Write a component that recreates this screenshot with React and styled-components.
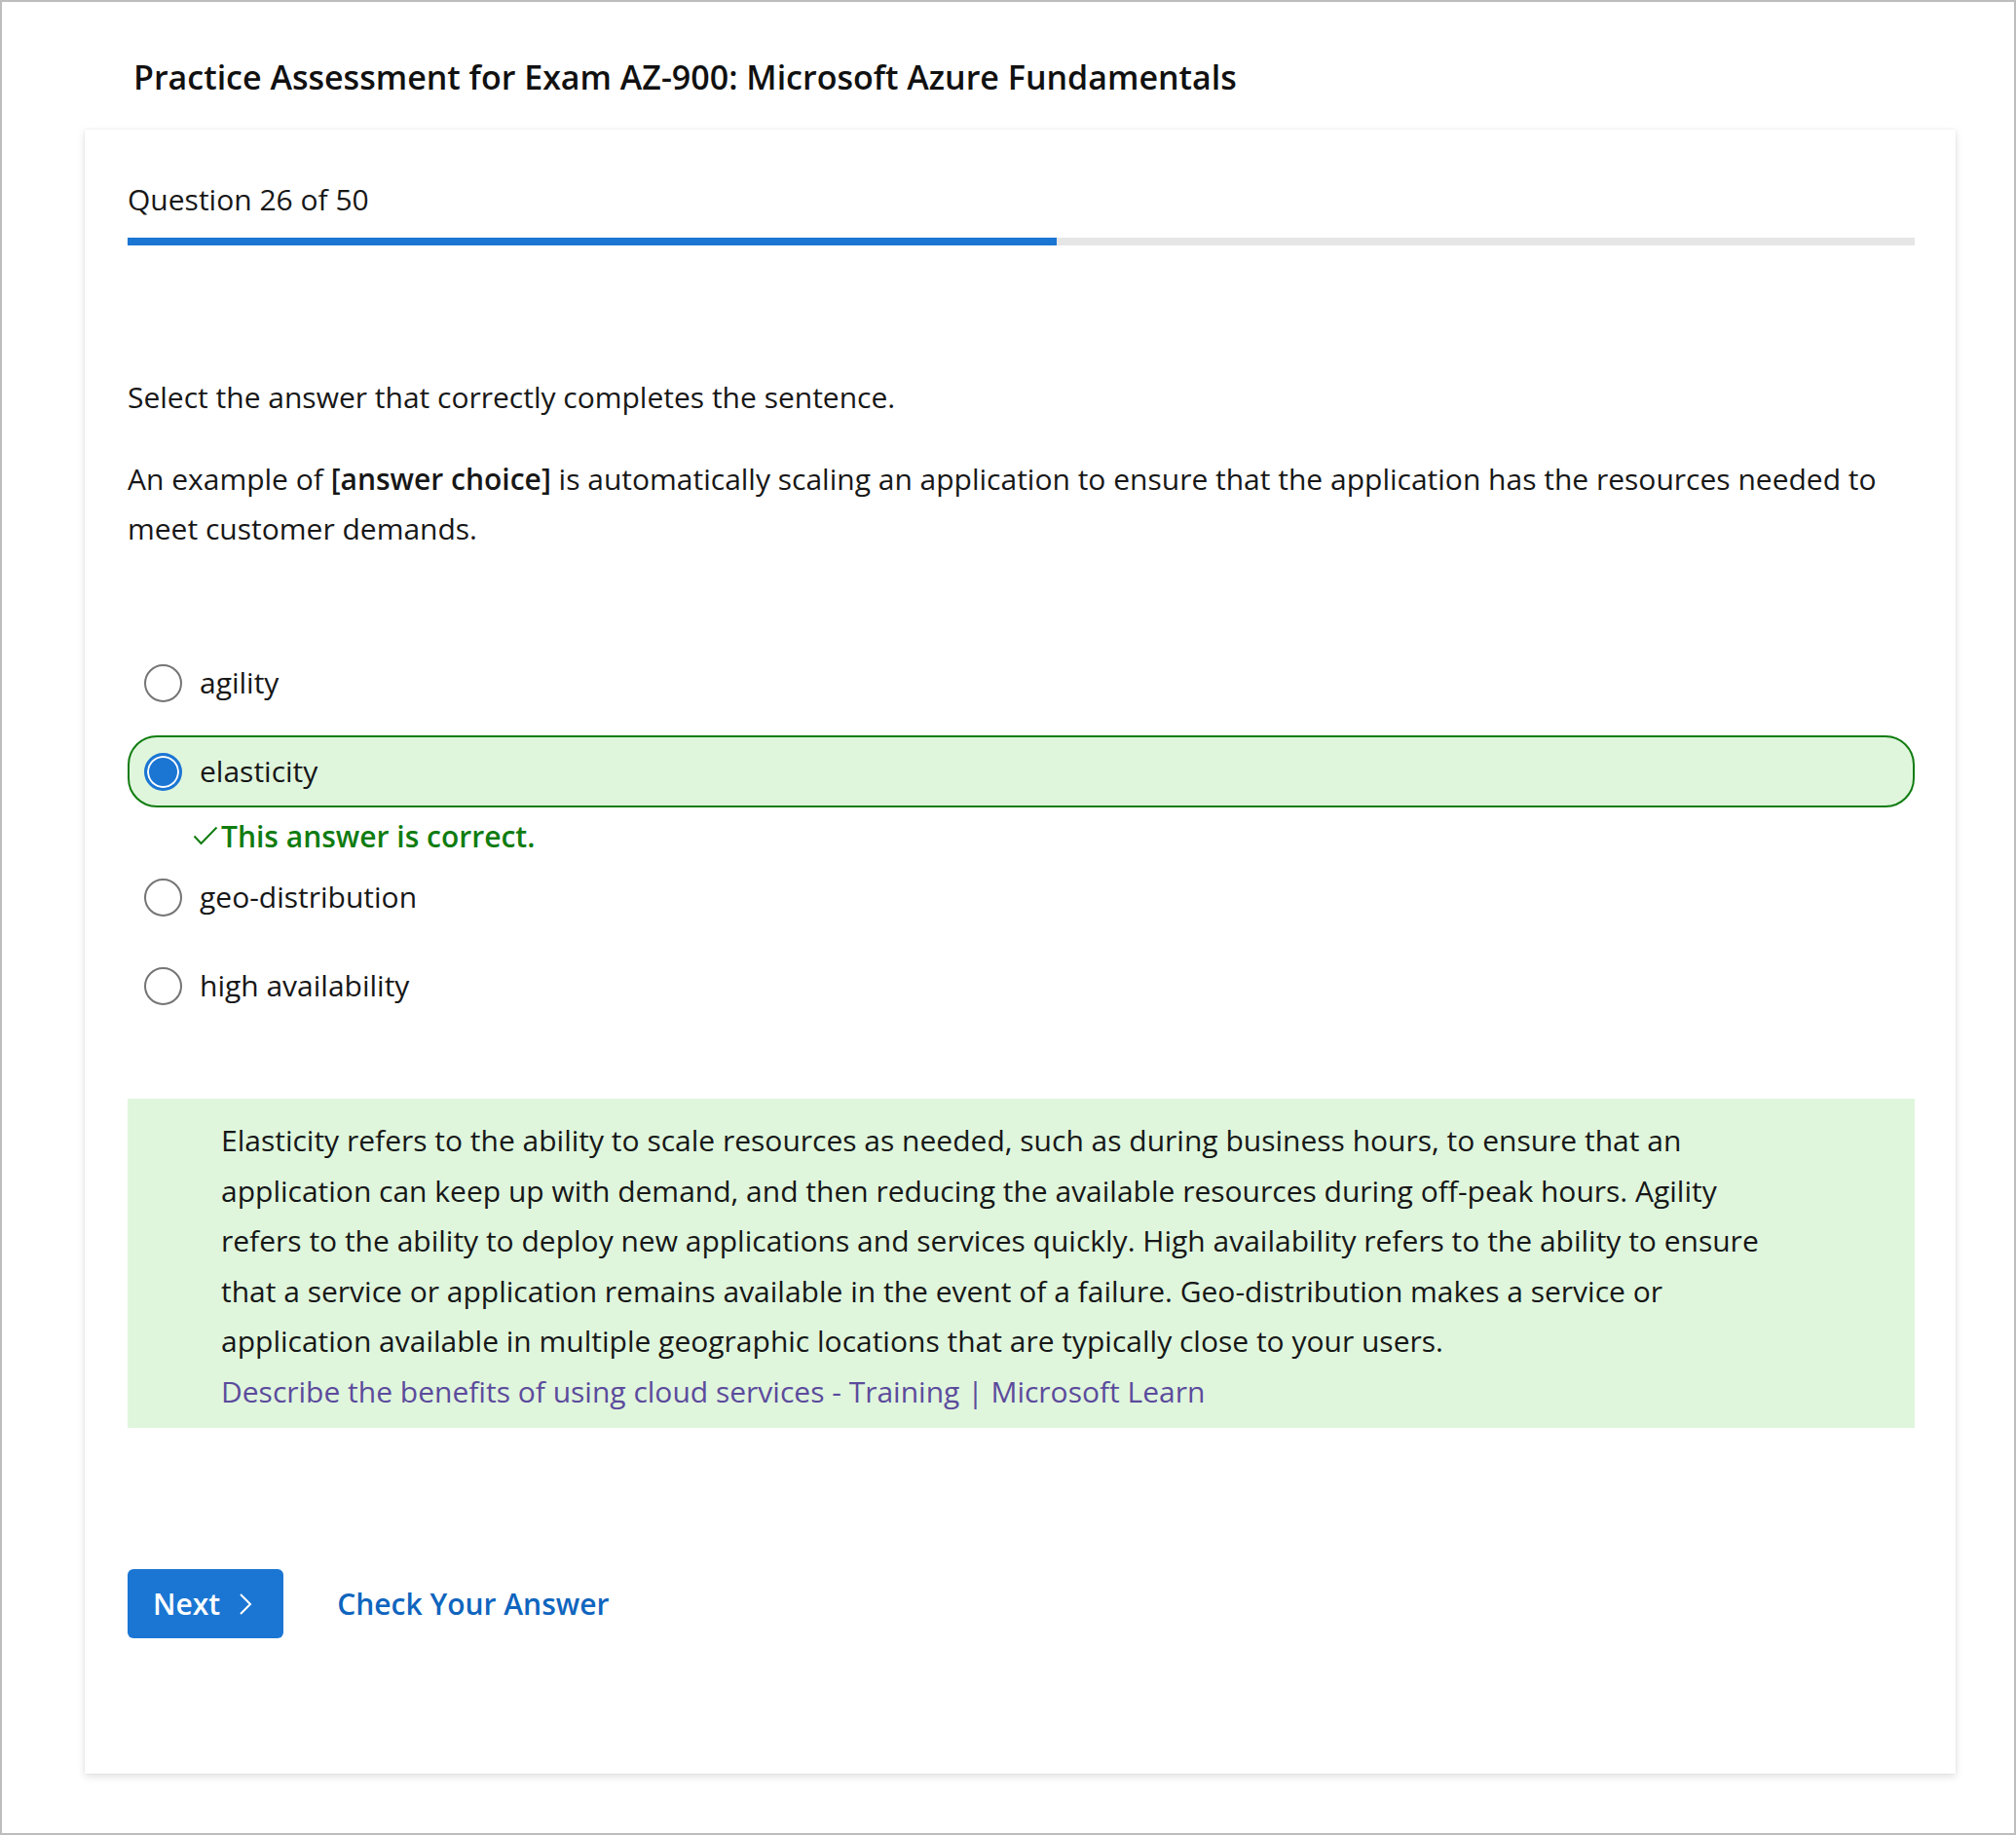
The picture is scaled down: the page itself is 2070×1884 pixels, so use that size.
import styled, { createGlobalStyle } from 'styled-components'

const GlobalStyle = createGlobalStyle`
    html, body {
        margin: 0;
        padding: 0;
        background: #ffffff;
    }
    body {
        font-family: "Open Sans", "Noto Sans", sans-serif;
        color: #171717;
    }
`

const options = [
    { id: 'agility', label: 'agility' },
    { id: 'elasticity', label: 'elasticity', selected: true, correct: true },
    { id: 'geo', label: 'geo-distribution' },
    { id: 'ha', label: 'high availability' },
]

const Check = () => (
    <svg width="26" height="20" viewBox="0 0 26 20" fill="none">
        <polyline points="1.5,10.5 8.5,18 24.5,1.5" stroke="#107c10" strokeWidth="2" strokeLinejoin="miter" />
    </svg>
)

const Chevron = () => (
    <svg width="14" height="24" viewBox="0 0 14 24" fill="none">
        <polyline points="2,2 12,12 2,22" stroke="#ffffff" strokeWidth="2" />
    </svg>
)

const App = () => {
    const current = 26
    const total = 50
    return (
        <Page>
            <GlobalStyle />
            <PageTitle>Practice Assessment for Exam AZ-900: Microsoft Azure Fundamentals</PageTitle>
            <Card>
                <Counter>Question {current} of {total}</Counter>
                <Progress>
                    <ProgressFill style={{ width: `${(current / total) * 100}%` }} />
                </Progress>

                <Prompt>Select the answer that correctly completes the sentence.</Prompt>
                <QuestionText>
                    An example of <Blank>[answer choice]</Blank> is automatically scaling an application to ensure that the application has the resources needed to meet customer demands.
                </QuestionText>

                <OptionList>
                    {options.map(o => (
                        <OptionGroup key={o.id} $tight={o.correct}>
                            <OptionRow $correct={o.correct}>
                                <Radio $checked={o.selected} />
                                <OptionLabel>{o.label}</OptionLabel>
                            </OptionRow>
                            {o.correct && (
                                <Feedback>
                                    <Check />
                                    <span>This answer is correct.</span>
                                </Feedback>
                            )}
                        </OptionGroup>
                    ))}
                </OptionList>

                <Explanation>
                    <p>
                        Elasticity refers to the ability to scale resources as needed, such as during business hours, to ensure that an application can keep up with demand, and then reducing the available resources during off-peak hours. Agility refers to the ability to deploy new applications and services quickly. High availability refers to the ability to ensure that a service or application remains available in the event of a failure. Geo-distribution makes a service or application available in multiple geographic locations that are typically close to your users.
                    </p>
                    <LearnLink href="#">Describe the benefits of using cloud services - Training | Microsoft Learn</LearnLink>
                </Explanation>

                <Actions>
                    <NextButton type="button">
                        Next
                        <Chevron />
                    </NextButton>
                    <CheckLink href="#">Check Your Answer</CheckLink>
                </Actions>
            </Card>
        </Page>
    )
}

const Page = styled.div`
    min-height: 100vh;
    box-sizing: border-box;
    border: 2px solid #bdbdbd;
    padding: 55px 60px 40px 85px;
`
const PageTitle = styled.h1`
    margin: 0 0 32px 50px;
    font-size: 34px;
    line-height: 44px;
    font-weight: 600;
    color: #111111;
`
const Card = styled.div`
    width: 1921px;
    box-sizing: border-box;
    background: #ffffff;
    padding: 51px 42px 139px 44px;
    box-shadow: 0 3px 8px rgba(0, 0, 0, 0.12), 0 0 2px rgba(0, 0, 0, 0.08);
`
const Counter = styled.div`
    font-size: 30px;
    line-height: 42px;
`
const Progress = styled.div`
    margin-top: 18px;
    height: 8px;
    background: #e6e6e6;
`
const ProgressFill = styled.div`
    height: 100%;
    background: #1b76d3;
`
const Prompt = styled.p`
    margin: 130px 0 0;
    font-size: 30px;
    line-height: 51px;
`
const QuestionText = styled.p`
    margin: 33px 0 0;
    font-size: 30px;
    line-height: 51px;
`
const Blank = styled.b`
    font-weight: 600;
`
const OptionList = styled.div`
    margin-top: 96px;
    display: flex;
    flex-direction: column;
`
const OptionGroup = styled.div`
    margin-bottom: ${({ $tight }) => ($tight ? '5px' : '17px')};
    &:last-child {
        margin-bottom: 0;
    }
`
const OptionRow = styled.div`
    height: 74px;
    box-sizing: border-box;
    display: flex;
    align-items: center;
    gap: 18px;
    padding-left: 15px;
    border-radius: 30px;
    border: 2px solid ${({ $correct }) => ($correct ? '#107c10' : 'transparent')};
    background: ${({ $correct }) => ($correct ? '#dff6dd' : 'transparent')};
`
const Radio = styled.span`
    width: 39px;
    height: 39px;
    box-sizing: border-box;
    border-radius: 50%;
    flex-shrink: 0;
    border: ${({ $checked }) => ($checked ? '3px solid #1b76d3' : '2px solid #757575')};
    background: ${({ $checked }) => ($checked ? '#1b76d3' : '#ffffff')};
    box-shadow: ${({ $checked }) => ($checked ? 'inset 0 0 0 2px #ffffff' : 'none')};
`
const OptionLabel = styled.span`
    font-size: 30px;
    line-height: 42px;
`
const Feedback = styled.div`
    margin-top: 8px;
    padding-left: 67px;
    display: flex;
    align-items: center;
    gap: 3px;
    height: 42px;
    color: #107c10;
    font-size: 30px;
    font-weight: 600;
`
const Explanation = styled.div`
    margin-top: 79px;
    background: #dff6dd;
    padding: 17px 126px 12px 96px;
    font-size: 30px;
    line-height: 51.5px;
    & p {
        margin: 0;
    }
`
const LearnLink = styled.a`
    color: #5c4b9c;
    text-decoration: none;
`
const Actions = styled.div`
    margin-top: 145px;
    display: flex;
    align-items: center;
    gap: 55px;
`
const NextButton = styled.button`
    height: 71px;
    display: flex;
    align-items: center;
    gap: 19px;
    padding: 0 32px 0 26px;
    border: none;
    border-radius: 6px;
    background: #1b76d3;
    color: #ffffff;
    font-family: inherit;
    font-size: 30px;
    font-weight: 600;
`
const CheckLink = styled.a`
    color: #0f65be;
    font-size: 30px;
    font-weight: 600;
    text-decoration: none;
`

export default App
